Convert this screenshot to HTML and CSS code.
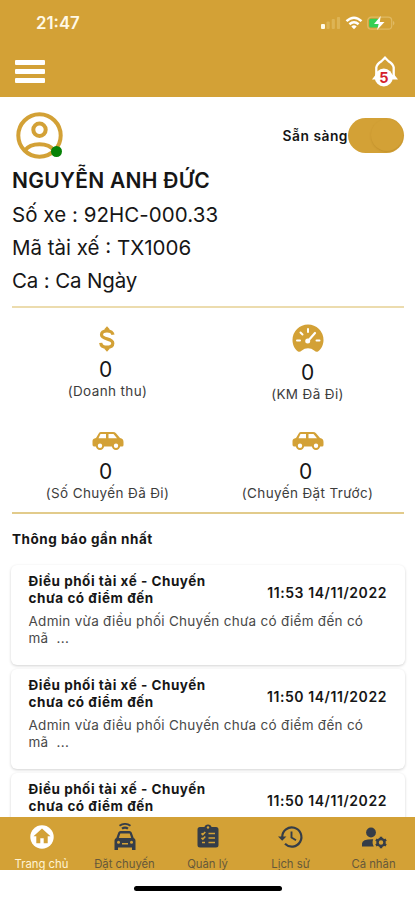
FILE: index.html
```html
<!DOCTYPE html>
<html lang="vi">
<head>
<meta charset="utf-8">
<meta name="viewport" content="width=device-width, initial-scale=1">
<title>Trang chủ</title>
<link rel="stylesheet" href="styles.css">
</head>
<body>
<div class="app">
  <header class="header">
    <div class="status">
      <span class="clock">21:47</span>
      <div class="status-icons">
        <svg width="20" height="14" viewBox="0 0 20 14"><rect x="0" y="8" width="4" height="5" rx="1" fill="#fffbe8"/><g fill="#ddb454"><rect x="5.5" y="5.5" width="3.2" height="7.5" rx="1"/><rect x="10.7" y="3" width="3.2" height="10" rx="1"/><rect x="15.9" y="1" width="3.2" height="12" rx="1"/></g></svg>
        <svg width="18" height="14" viewBox="0 0 18 14" fill="none" stroke="#fff" stroke-width="2.5"><path d="M1.500 5.200Q9-1.800 16.500 5.200"/><path d="M4.400 8.300Q9 4.300 13.600 8.300"/><path d="M6.300 10.400Q9 8.300 11.700 10.400L9 13.200z" fill="#fff" stroke="none"/></svg>
        <svg width="29" height="14" viewBox="0 0 29 14"><rect x=".7" y="1.200" width="24" height="12" rx="3.500" fill="none" stroke="#e0b962" stroke-width="1.200"/><path d="M26.300 4.800q2 2.200 0 4.800z" fill="#e6c67c"/><rect x="2.200" y="2.800" width="9.500" height="8.800" rx="1.500" fill="#35cf55"/><path d="M13.700 0L7 8h4.700L10 14l7.500-8h-4.700z" fill="#fff"/></svg>
      </div>
    </div>
    <div class="toolbar">
      <div class="menu"><i></i><i></i><i></i></div>
      <div class="bell">
        <svg width="26" height="31" viewBox="0 0 26 31"><path d="M4.300 22V11.500Q4.800 8 9.500 5.200L13 1.700l3.500 3.500q4.700 2.800 5.200 6.300V22" fill="none" stroke="#fff" stroke-width="2.300"/><path d="M4 19.500L1.500 22.800h23l-2.500-3.300z" fill="#fff" stroke="#fff" stroke-width="1.500"/><circle cx="11.800" cy="21.500" r="9" fill="#fff"/></svg>
        <b class="count">5</b>
      </div>
    </div>
  </header>

  <main class="content">
    <section class="profile">
      <div class="profile-top">
        <div class="avatar">
          <svg width="48" height="48" viewBox="0 0 48 48" fill="none" stroke="#d3a136" stroke-width="4"><circle cx="23.500" cy="23.500" r="21.200"/><circle cx="23.500" cy="17.700" r="6.200"/><path d="M9 38.400Q13.500 32.300 23.500 32.300T38 38.400"/></svg>
          <i class="online"></i>
        </div>
        <div class="ready"><span>Sẵn sàng</span><div class="switch"><i></i></div></div>
      </div>
      <h1 class="name">NGUYỄN ANH ĐỨC</h1>
      <p class="line plate">Số xe : 92HC-000.33</p>
      <p class="line code">Mã tài xế : TX1006</p>
      <p class="line shift">Ca : Ca Ngày</p>
    </section>

    <section class="stats">
      <div class="stat">
        <div class="stat-icon dollar"><svg width="16" height="26" viewBox="0 0 16 26" fill="none" stroke="#d3a136" stroke-width="3.200"><path d="M14 8.800C13.500 5.800 11.300 5 8 5 4.500 5 2.500 6.400 2.500 8.800c0 5.200 11.300 2.900 11.300 8.400 0 2.600-2.300 4-5.800 4-3.700 0-6-1.300-6.300-4.400"/><path d="M5.500 5V3L8 .3 10.500 3v2zM5.500 21v2L8 25.700l2.500-2.700v-2z" fill="#d3a136" stroke="none"/></svg></div>
        <div class="num">0</div><div class="label">(Doanh thu)</div>
      </div>
      <div class="stat gauge">
        <div class="stat-icon"><svg width="32" height="28" viewBox="0 0 32 28"><path d="M6 27.500C2.500 25 .5 20.500.5 16A15.500 15.500 0 0 1 31.500 16c0 4.500-2 9-5.500 11.500-1.500.5-2.500.2-3.500-.7-4-3.300-9-3.300-13 0-1 .9-2 1.200-3.500.7z" fill="#d3a136"/><g stroke="#fff" stroke-width="2" stroke-linecap="round"><path d="M5 16.500h3M24.500 16.500h3M8.500 8.500l2 2M16 5v3"/><path d="M15.500 17.500L23 9" stroke-width="2.200"/></g><circle cx="15.700" cy="17" r="2.500" fill="#fff"/></svg></div>
        <div class="num">0</div><div class="label">(KM Đã Đi)</div>
      </div>
      <div class="stat">
        <div class="stat-icon"><svg width="32" height="20" viewBox="0 0 32 20"><path d="M7 2Q7.500 1 9 1h12q2 0 3 1.300L28 7q3.500.5 3.500 4v3q0 1.500-1.500 1.500H2Q.5 15.500.5 13.500V10Q.5 7.500 4 7z" fill="#d3a136"/><path d="M8.500 3H14v4.300H6.500zM16.500 3h5L25 7.300h-8.500z" fill="#fff"/><g fill="#fff" stroke="#d3a136" stroke-width="2"><circle cx="8" cy="14.800" r="3.200"/><circle cx="24" cy="14.800" r="3.200"/></g></svg></div>
        <div class="num">0</div><div class="label">(Số Chuyến Đã Đi)</div>
      </div>
      <div class="stat">
        <div class="stat-icon"><svg width="32" height="20" viewBox="0 0 32 20"><path d="M7 2Q7.500 1 9 1h12q2 0 3 1.300L28 7q3.500.5 3.500 4v3q0 1.500-1.500 1.500H2Q.5 15.500.5 13.500V10Q.5 7.500 4 7z" fill="#d3a136"/><path d="M8.500 3H14v4.300H6.500zM16.500 3h5L25 7.300h-8.500z" fill="#fff"/><g fill="#fff" stroke="#d3a136" stroke-width="2"><circle cx="8" cy="14.800" r="3.200"/><circle cx="24" cy="14.800" r="3.200"/></g></svg></div>
        <div class="num">0</div><div class="label">(Chuyến Đặt Trước)</div>
      </div>
    </section>

    <section class="notices">
      <h2 class="heading">Thông báo gần nhất</h2>
      <article class="card">
        <div class="card-head"><h3>Điều phối tài xế - Chuyến<br>chưa có điểm đến</h3><time>11:53 14/11/2022</time></div>
        <p>Admin vừa điều phối Chuyến chưa có điểm đến có<br>mã &nbsp;...</p>
      </article>
      <article class="card">
        <div class="card-head"><h3>Điều phối tài xế - Chuyến<br>chưa có điểm đến</h3><time>11:50 14/11/2022</time></div>
        <p>Admin vừa điều phối Chuyến chưa có điểm đến có<br>mã &nbsp;...</p>
      </article>
      <article class="card">
        <div class="card-head"><h3>Điều phối tài xế - Chuyến<br>chưa có điểm đến</h3><time>11:50 14/11/2022</time></div>
      </article>
    </section>
  </main>

  <nav class="tabs">
    <div class="tab active">
      <svg width="28" height="28" viewBox="0 0 28 28"><circle cx="14" cy="14" r="11.700" fill="#fff"/><path d="M14 5.500L5.500 13.300h2.800v7h4v-5h3.400v5h4v-7h2.800z" fill="#d3a136"/></svg>
      <span>Trang chủ</span>
    </div>
    <div class="tab">
      <svg width="28" height="28" viewBox="0 0 28 28" fill="#353d48"><g fill="none" stroke="#353d48" stroke-width="1.800"><path d="M8.500 2.800Q14-1 19.500 2.800"/><path d="M11 5.700Q14 3.500 17 5.700" stroke-width="2.200"/></g><path d="M7.300 9.500Q7.800 8 9.500 8h9q1.700 0 2.200 1.500l2 5.500q1.800.5 1.800 2.500v9.500h-3.500v-2.500H7v2.500H3.500v-9.500q0-2 1.800-2.500z"/><path d="M9.300 10.500h9.400l1.500 4.500H7.800z" fill="#d3a136"/><g fill="#d3a136"><circle cx="7.500" cy="19.300" r="1.500"/><circle cx="20.500" cy="19.300" r="1.500"/><path d="M11 20h6v1.500h-6z"/></g></svg>
      <span>Đặt chuyến</span>
    </div>
    <div class="tab">
      <svg width="28" height="28" viewBox="0 0 28 28"><path d="M6 4H10.500Q11 1.500 14 1.500T17.500 4H22q2.500 0 2.500 2.500v15.500q0 2.500-2.500 2.500H6q-2.500 0-2.500-2.500V6.500Q3.500 4 6 4z" fill="#353d48"/><circle cx="14" cy="4.500" r="1.200" fill="#d3a136"/><path d="M14.500 10.500H21M14.500 15H21M14.500 19.500H21M7.500 10.300l1.300 1.200 2.500-2.500M7.500 14.800l1.300 1.200 2.500-2.500M8 19.500h3" fill="none" stroke="#d3a136" stroke-width="1.700"/></svg>
      <span>Quản lý</span>
    </div>
    <div class="tab">
      <svg width="28" height="28" viewBox="0 0 28 28" fill="none" stroke="#353d48" stroke-width="2.200"><path d="M5.200 14A9.600 9.600 0 1 1 8 20.800"/><path d="M1 13.500h8.400l-4.200 4.300z" fill="#353d48" stroke="none"/><path d="M14.500 8.500v6l4.500 2.700" stroke-width="1.900"/></svg>
      <span>Lịch sử</span>
    </div>
    <div class="tab">
      <svg width="28" height="28" viewBox="0 0 28 28" fill="#353d48"><circle cx="11" cy="9.500" r="4.900"/><path d="M2 23.500v-3q0-4.500 11.200-4.300-1.500 4 .6 7.300z"/><circle cx="21" cy="19.500" r="3.500" fill="none" stroke="#353d48" stroke-width="2.500"/><path d="M21 13.700v2M21 23.300v2M15.900 16.600l1.900 1.100M24.200 21.300l1.900 1.100M15.900 22.400l1.900-1.100M24.200 17.700l1.900-1.100" stroke="#353d48" stroke-width="2.500"/></svg>
      <span>Cá nhân</span>
    </div>
  </nav>
  <footer class="home-area"><div class="home-indicator"></div></footer>
</div>
</body>
</html>
```
FILE: styles.css
```css
* { box-sizing: border-box; margin: 0; padding: 0; }
body { background: #fff; color: #161616; font-family: Inter, "Noto Sans", sans-serif; }
svg { display: block; flex: none; }
.app { width: 415px; height: 900px; display: flex; flex-direction: column; overflow: hidden; }
.header { height: 97px; flex: none; background: #d3a136; }
.status { height: 45px; padding: 0 19px 0 36px; display: flex; justify-content: space-between; align-items: center; }
.clock { color: #fff9e6; font-size: 16.8px; font-weight: 600; line-height: 20px; }
.status-icons { display: flex; gap: 4px; }
.toolbar { padding: 11px 17px 0 15px; display: flex; justify-content: space-between; }
.menu { width: 30px; padding-top: 4px; display: flex; flex-direction: column; gap: 4px; }
.menu i { height: 5px; background: #fff; border-radius: 1px; }
.bell { position: relative; width: 26px; height: 31px; }
.count { position: absolute; left: 2px; top: 14px; width: 20px; text-align: center; font-size: 14.5px; line-height: 16px; color: #d4202c; }
.content { height: 720px; flex: none; overflow: hidden; }
.profile { height: 211px; margin: 0 11px 0 12px; padding-top: 15px; border-bottom: 2px solid #ecdcae; }
.profile-top { height: 52px; display: flex; justify-content: space-between; }
.avatar { position: relative; width: 48px; height: 48px; margin-left: 3.5px; }
.online { position: absolute; left: 35px; top: 33.5px; width: 11px; height: 11px; border-radius: 50%; background: #078207; }
.ready { display: flex; align-items: center; height: 35px; margin-top: 6px; font-size: 13.8px; font-weight: 600; letter-spacing: .5px; }
.switch { width: 56px; height: 35px; border-radius: 18px; background: #d3a136; display: flex; justify-content: flex-end; }
.switch i { width: 32px; height: 32px; margin: 1px; border-radius: 50%; background: #d3a136; box-shadow: 0 1px 2px rgba(130, 85, 0, .2); }
.name { height: 34px; line-height: 34px; font-size: 21px; font-weight: 600; letter-spacing: .27px; white-space: nowrap; }
.line { height: 33px; line-height: 33px; font-size: 20.5px; white-space: nowrap; }
.plate { letter-spacing: .05px; }
.shift { letter-spacing: -.15px; }
.stats { height: 206px; margin: 0 11px 0 12px; border-bottom: 2px solid #e2cb8b; display: grid; grid-template-columns: 191px 209px; grid-template-rows: 102px 102px; }
.stat { display: flex; flex-direction: column; align-items: center; padding-top: 14px; }
.stat-icon { height: 34px; display: flex; align-items: center; }
.dollar { padding-right: 2px; }
.num { height: 26px; line-height: 27px; padding-right: 4px; font-size: 21px; }
.label { height: 19px; line-height: 19px; font-size: 13.5px; letter-spacing: .37px; color: #3d3d3d; white-space: nowrap; }
.gauge .stat-icon { height: 31px; }
.gauge .num { height: 24px; margin-top: 6px; padding-right: 0; }
.gauge .label { margin-top: 2px; }
.notices { padding: 15px 10px 0 11px; }
.heading { height: 20px; line-height: 20px; margin: 0 0 16px 1px; font-size: 13.5px; font-weight: 700; letter-spacing: .52px; }
.card { height: 100px; margin-bottom: 4px; padding: 8px 18px 0 17.5px; border-radius: 6px; background: #fff; box-shadow: 0 1px 3px rgba(0, 0, 0, .18); }
.card-head { display: flex; justify-content: space-between; align-items: center; }
.card h3 { font-size: 13.5px; font-weight: 700; line-height: 17px; letter-spacing: .52px; white-space: nowrap; }
.card time { padding-top: 4px; font-size: 14px; font-weight: 600; line-height: 17px; letter-spacing: .57px; white-space: nowrap; }
.card p { margin-top: 6px; font-size: 13.5px; line-height: 17px; letter-spacing: .28px; color: #494949; white-space: nowrap; }
.tabs { height: 53px; flex: none; background: #d3a136; display: grid; grid-template-columns: repeat(5, 83px); overflow: hidden; }
.tab { padding-top: 6px; display: flex; flex-direction: column; align-items: center; color: #66583a; font-size: 11.3px; }
.tab span { margin-top: 6px; line-height: 15px; white-space: nowrap; }
.tab.active { color: #fff4d4; }
.home-area { height: 30px; flex: none; padding-top: 16px; background: #fff; }
.home-indicator { width: 148px; height: 5px; margin: 0 auto; border-radius: 3px; background: #000; }
```
